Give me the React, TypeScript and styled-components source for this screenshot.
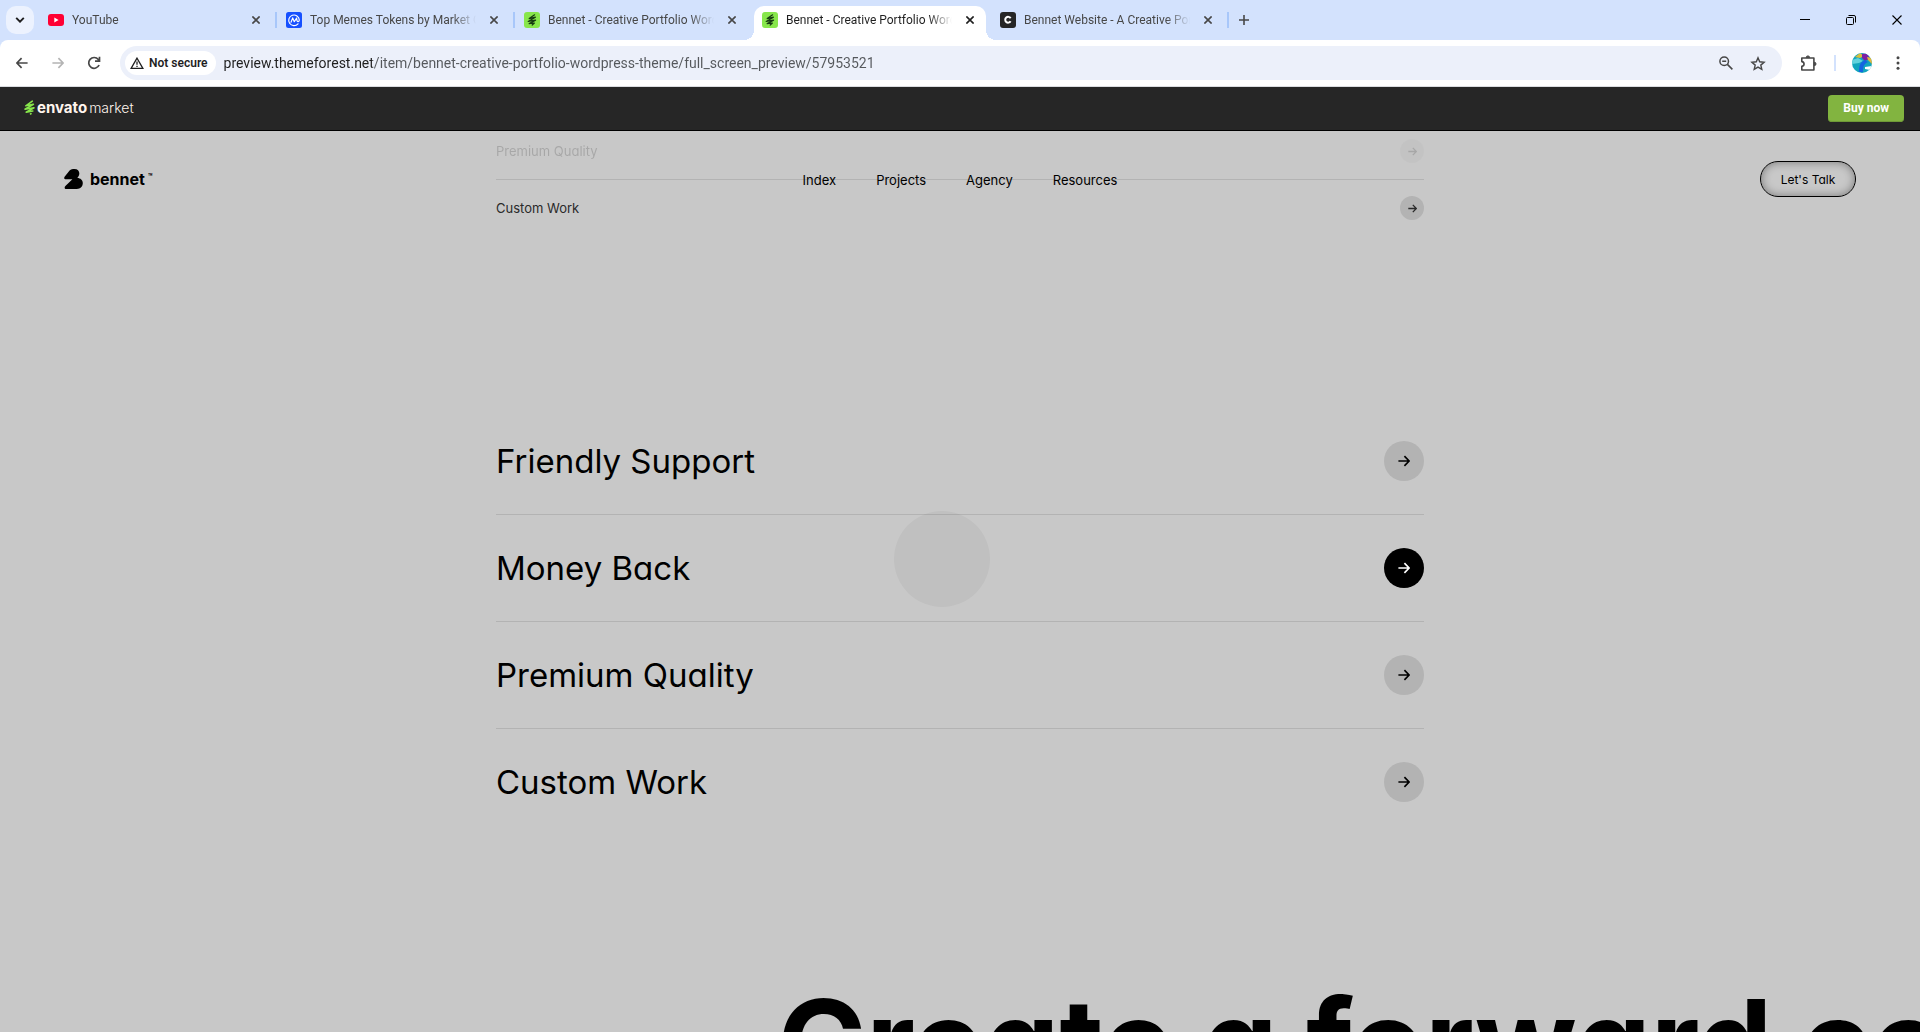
import React from "react";
import styled, { createGlobalStyle, css } from "styled-components";

const chromeFont = `Roboto, "Open Sans", "Noto Sans", sans-serif`;
const siteFont = `Inter, "Liberation Sans", sans-serif`;

const GlobalStyle = createGlobalStyle`
  *, *::before, *::after { box-sizing: border-box; }
  body { margin: 0; background: #c8c8c8; }
  button { border: 0; padding: 0; background: none; font: inherit; color: inherit; }
  a { color: inherit; text-decoration: none; }
  ul { margin: 0; padding: 0; list-style: none; }
  svg { display: block; flex: none; }
`;

const Window = styled.div`
  display: flex;
  flex-direction: column;
  height: 100vh;
  overflow: hidden;
`;

/* Browser tab strip */

const TabStrip = styled.div`
  display: flex;
  align-items: flex-start;
  height: 40px;
  padding-left: 6px;
  background: #d3e2fd;
  font-family: ${chromeFont};
  font-size: 12px;
`;

const TabSearch = styled.button`
  display: grid;
  place-items: center;
  width: 28px;
  height: 28px;
  margin: 6px 6px 0 0;
  border-radius: 10px;
  background: #ecf2fe;
  color: #1f1f1f;
`;

const TabItem = styled.div<{ $active?: boolean; $divider?: boolean }>`
  position: relative;
  display: flex;
  align-items: center;
  width: 232px;
  height: 34px;
  margin: 6px 6px 0 0;
  padding: 0 10px 6px 8px;
  color: #474747;
  ${(p) =>
    p.$active &&
    css`
      background: #fff;
      color: #1f1f1f;
      border-radius: 10px 10px 0 0;
      &::before,
      &::after {
        content: "";
        position: absolute;
        bottom: 0;
        width: 10px;
        height: 10px;
      }
      &::before {
        left: -10px;
        background: radial-gradient(circle at 0 0, transparent 10px, #fff 10px);
      }
      &::after {
        right: -10px;
        background: radial-gradient(circle at 100% 0, transparent 10px, #fff 10px);
      }
    `}
  ${(p) =>
    p.$divider &&
    css`
      &::after {
        content: "";
        position: absolute;
        right: -5px;
        top: 6px;
        width: 2px;
        height: 16px;
        background: #a8c7fa;
      }
    `}
`;

const TabTitle = styled.span`
  flex: 1;
  min-width: 0;
  margin: 0 12px 0 8px;
  line-height: 20px;
  white-space: nowrap;
  overflow: hidden;
  mask-image: linear-gradient(to right, #000 calc(100% - 24px), transparent);
`;

const TabClose = styled.button`
  display: grid;
  place-items: center;
  width: 12px;
  height: 16px;
`;

const NewTab = styled.button`
  display: grid;
  place-items: center;
  width: 28px;
  height: 28px;
  margin-top: 6px;
  color: #474747;
`;

const WindowControls = styled.div`
  display: flex;
  margin-left: auto;
`;

const WindowButton = styled.button`
  display: grid;
  place-items: center;
  width: 46px;
  height: 40px;
  color: #000;
`;

/* Browser toolbar */

const ToolbarBack = styled.div`
  background: #d3e2fd;
`;

const Toolbar = styled.div`
  display: flex;
  align-items: center;
  height: 47px;
  padding: 0 4px;
  background: #fff;
  border-bottom: 1px solid #dadce0;
  border-radius: 8px 8px 0 0;
  color: #474747;
  font-family: ${chromeFont};
`;

const ToolButton = styled.button`
  display: grid;
  place-items: center;
  width: 36px;
  height: 34px;
  &:disabled { color: #b4b4b4; }
`;

const Omnibox = styled.div`
  display: flex;
  flex: 1;
  align-items: center;
  height: 34px;
  margin: 0 8px;
  padding: 0 8px 0 5px;
  border-radius: 17px;
  background: #ecf0fa;
`;

const SecurityChip = styled.button`
  display: flex;
  align-items: center;
  gap: 5px;
  height: 24px;
  padding: 0 8px 0 5px;
  border-radius: 12px;
  background: #fff;
  color: #1f1f1f;
  font-size: 12px;
  font-weight: 600;
`;

const Address = styled.input`
  flex: 1;
  min-width: 0;
  height: 24px;
  margin-left: 8px;
  padding: 0;
  border: 0;
  outline: 0;
  background: linear-gradient(to right, #1f1f1f 148px, #55585c 148px) text;
  color: #474747;
  -webkit-text-fill-color: transparent;
  font-family: inherit;
  font-size: 14px;
`;

const FieldButton = styled(ToolButton)`
  width: 32px;
`;

const Divider = styled.span`
  width: 2px;
  height: 16px;
  margin: 0 8px;
  background: #d3e2fd;
`;

/* Marketplace preview bar */

const MarketBar = styled.header`
  display: flex;
  flex: none;
  align-items: center;
  justify-content: space-between;
  height: 44px;
  padding: 0 16px 0 24px;
  background: #262626;
  border-bottom: 1px solid #000;
  font-family: ${siteFont};
`;

const MarketLogo = styled.a`
  display: flex;
  align-items: center;
  padding-bottom: 2px;
  color: #fff5ed;
  line-height: 20px;
`;

const MarketName = styled.span<{ $bold?: boolean }>`
  margin-left: 2px;
  font-size: ${(p) => (p.$bold ? "15px" : "14px")};
  font-weight: ${(p) => (p.$bold ? 700 : 300)};
`;

const BuyButton = styled.a`
  height: 27px;
  padding: 0 15px;
  border-radius: 4px;
  background: #82b440;
  box-shadow: inset 0 -1px 0 #6f9a37;
  color: #fff;
  font: 700 12px/27px Roboto, sans-serif;
`;

/* Theme page */

const Page = styled.main`
  position: relative;
  flex: 1;
  min-height: 0;
  overflow: hidden;
  background: #c8c8c8;
  color: #000;
  font-family: ${siteFont};
  font-feature-settings: "cv11";
`;

const SiteHeader = styled.div`
  position: absolute;
  inset: 0 0 auto;
  display: grid;
  grid-template-columns: 1fr auto 1fr;
  align-items: center;
  height: 96px;
  padding: 0 64px;
  font-size: 13px;
`;

const Brand = styled.a`
  display: flex;
  align-items: center;
  gap: 7px;
  font-size: 16px;
  font-weight: 700;
  line-height: 20px;
`;

const Trademark = styled.sup`
  margin-left: 3px;
  font-size: 7px;
  line-height: 8px;
`;

const SiteNav = styled.nav`
  display: flex;
  gap: 40px;
  padding-top: 2px;
`;

const TalkButton = styled.button`
  justify-self: end;
  width: 96px;
  height: 36px;
  border: 1px solid #000;
  border-radius: 18px;
  box-shadow: inset 0 0 10px rgba(0, 0, 0, 0.4);
  font-size: 12px;
`;

const Features = styled.ul<{ $large?: boolean }>`
  width: 928px;
  max-width: calc(100% - 64px);
  margin: ${(p) => (p.$large ? "172px auto 0" : "-8px auto 0")};
  font-size: ${(p) => (p.$large ? "33px" : "13px")};
`;

const Feature = styled.li<{ $large?: boolean; $faded?: boolean }>`
  & + & { border-top: 1px solid ${(p) => (p.$large ? "#b3b3b3" : "#bfbfbf")}; }
  > a {
    display: flex;
    align-items: center;
    justify-content: space-between;
    height: ${(p) => (p.$large ? "106px" : "56px")};
    color: ${(p) => (p.$large ? "#000" : "#2a2a2a")};
    opacity: ${(p) => (p.$faded ? 0.2 : 1)};
  }
`;

const ArrowDot = styled.span<{ $large?: boolean; $active?: boolean }>`
  display: grid;
  place-items: center;
  width: ${(p) => (p.$large ? "40px" : "24px")};
  height: ${(p) => (p.$large ? "40px" : "24px")};
  border-radius: 50%;
  background: ${(p) => (p.$active ? "#000" : "#b3b3b3")};
  color: ${(p) => (p.$active ? "#fff" : "inherit")};
`;

const Headline = styled.h2`
  margin: 128px 0 0;
  padding-left: 40.5%;
  font-size: 120px;
  font-weight: 700;
  line-height: 160px;
  white-space: nowrap;
`;

const CursorHalo = styled.div`
  position: absolute;
  left: 894px;
  top: 380px;
  width: 96px;
  height: 96px;
  border-radius: 50%;
  background: rgba(0, 0, 0, 0.04);
  pointer-events: none;
`;

const Cross = ({ size = 8, weight = 1.6 }: { size?: number; weight?: number }) => (
  <svg width={size} height={size} viewBox="0 0 8 8" fill="none" stroke="currentColor" strokeWidth={weight}>
    <path d="M.4.4l7.2 7.2M7.6.4L.4 7.6" />
  </svg>
);

const Arrow = ({ size, back }: { size: number; back?: boolean }) => (
  <svg width={size} height={size} viewBox="0 0 12 12" fill="none" stroke="currentColor" strokeWidth="1.7">
    <path d={back ? "M11.600 6H1M5.600 1.200L.9 6l4.700 4.800" : "M.4 6h10.600M6.400 1.200L11.100 6l-4.700 4.800"} />
  </svg>
);

const YouTubeIcon = () => (
  <svg width="16" height="16" viewBox="0 0 16 16">
    <rect y="2" width="16" height="12" rx="3" fill="#ff0033" />
    <path d="M6.3 5.6v4.8L10.6 8z" fill="#fff" />
  </svg>
);

const MarketCapIcon = () => (
  <svg width="16" height="16" viewBox="0 0 16 16" fill="none">
    <rect width="16" height="16" rx="2.5" fill="#1650ff" />
    <path
      d="M12 11.8A5.3 5.3 0 1 1 13.3 8c0 1.900-2.200 2.200-2.400.3L10.600 6 8.300 9.700 6.700 5.900 5 10.200"
      stroke="#fff"
      strokeWidth="1.200"
      strokeLinecap="round"
      strokeLinejoin="round"
    />
  </svg>
);

const EnvatoTabIcon = () => (
  <svg width="16" height="16" viewBox="0 0 16 16" fill="none">
    <rect width="16" height="16" rx="3" fill="#87e64b" />
    <path
      d="M10.600 2.800L5.200 6.600l6.200-1.400L4.200 9.400l7.400-1.200L5.200 11.600l5.200-.6-2.200 2"
      stroke="#173b12"
      strokeWidth="1.200"
      strokeLinecap="round"
      strokeLinejoin="round"
    />
  </svg>
);

const EnvatoMark = () => (
  <svg width="11" height="15" viewBox="0 0 11 15" fill="none">
    <path
      d="M8.300 1.200L1.800 5.800l7.600-1.600L1 9.200l9-1.400-7.800 4.400 6.600-1.200M6.600 14l.4-.3"
      stroke="#87e64b"
      strokeWidth="1.600"
      strokeLinecap="round"
      strokeLinejoin="round"
    />
  </svg>
);

const LetterTabIcon = () => (
  <svg width="16" height="16" viewBox="0 0 16 16" fill="none">
    <rect width="16" height="16" rx="3" fill="#262626" />
    <path d="M10.600 6.200A2.900 2.900 0 1 0 10.600 9.300" stroke="#fff" strokeWidth="2" />
  </svg>
);

const BennetMark = () => (
  <svg width="19" height="20" viewBox="0 0 19 20">
    <path d="M5.600 1.400C7 .3 8.600 0 10.400 0c3.400 0 5.100 2.200 4.900 4.700-.1 1.700-.9 2.900-2 4.200 3.200 0 5.500 2.100 5.500 5.200 0 3.500-2.400 5.900-6 5.900H2.200C.4 20 .2 18.300 1.400 17L8.400 10.200H1.300C0 10.200-.1 8.700.6 7.700z" />
  </svg>
);

const Avatar = () => (
  <svg width="20" height="20" viewBox="0 0 20 20">
    <clipPath id="avatarClip">
      <circle cx="10" cy="10" r="10" />
    </clipPath>
    <g clipPath="url(#avatarClip)">
      <rect width="20" height="20" fill="#12a5bd" />
      <path d="M0 7l6-2 5 3-4 2-7 1z" fill="#62d2dc" />
      <path d="M3 4l5-4 4 3-4 2z" fill="#d8bd3c" />
      <path d="M10 1l6-1 1 6-4 2-3-3z" fill="#7b1fa2" />
      <path d="M15 4l5 1v6l-4-4z" fill="#e5b93a" />
      <path d="M13 7c-5 2-6 6-6 12h4c0-6 1-8 5-10z" fill="#1565e0" />
      <path d="M13 14l7-1-2 4-5-1z" fill="#fff" />
    </g>
  </svg>
);

const tabs = [
  { title: "YouTube", icon: <YouTubeIcon />, divider: true },
  { title: "Top Memes Tokens by Market C", icon: <MarketCapIcon />, divider: true },
  { title: "Bennet - Creative Portfolio Word", icon: <EnvatoTabIcon /> },
  { title: "Bennet - Creative Portfolio Word", icon: <EnvatoTabIcon />, active: true },
  { title: "Bennet Website - A Creative Por", icon: <LetterTabIcon />, divider: true },
];

const Browser = () => (
  <>
    <TabStrip>
      <TabSearch aria-label="Search tabs">
        <svg width="10" height="6" viewBox="0 0 10 6" fill="none" stroke="currentColor" strokeWidth="1.900">
          <path d="M1.200.9L5 4.700 8.800.9" />
        </svg>
      </TabSearch>
      {tabs.map((tab, i) => (
        <TabItem key={i} $active={tab.active} $divider={tab.divider}>
          {tab.icon}
          <TabTitle>{tab.title}</TabTitle>
          <TabClose aria-label={`Close ${tab.title}`}>
            <Cross />
          </TabClose>
        </TabItem>
      ))}
      <NewTab aria-label="New tab">
        <svg width="10" height="10" viewBox="0 0 10 10" stroke="currentColor" strokeWidth="1.600">
          <path d="M5 0v10M0 5h10" />
        </svg>
      </NewTab>
      <WindowControls>
        <WindowButton aria-label="Minimize">
          <svg width="10" height="10" viewBox="0 0 10 10" stroke="currentColor">
            <path d="M0 4.500h10" />
          </svg>
        </WindowButton>
        <WindowButton aria-label="Restore">
          <svg width="10" height="10" viewBox="0 0 10 10" fill="none" stroke="currentColor">
            <rect x=".5" y="2.500" width="7" height="7" rx="1" />
            <path d="M2.500.5H8A1.500 1.500 0 0 1 9.500 2v5.500" />
          </svg>
        </WindowButton>
        <WindowButton aria-label="Close window">
          <Cross size={10} weight={0.9} />
        </WindowButton>
      </WindowControls>
    </TabStrip>
    <ToolbarBack>
      <Toolbar>
        <ToolButton aria-label="Back">
          <Arrow size={12} back />
        </ToolButton>
        <ToolButton aria-label="Forward" disabled>
          <Arrow size={12} />
        </ToolButton>
        <ToolButton aria-label="Reload">
          <svg width="14" height="14" viewBox="0 0 14 14" fill="none" stroke="currentColor" strokeWidth="1.700">
            <path d="M12.100 9A5.400 5.400 0 1 1 11.300 3.500L12.300 5M12.500.7V5.200H8" />
          </svg>
        </ToolButton>
        <Omnibox>
          <SecurityChip>
            <svg width="14" height="12" viewBox="0 0 14 12" fill="none" stroke="currentColor" strokeWidth="1.300">
              <path d="M7 1.200L1.100 11.300h11.800zM7 4.600v3.200M7 8.700V10" />
            </svg>
            Not secure
          </SecurityChip>
          <Address
            aria-label="Address"
            defaultValue="preview.themeforest.net/item/bennet-creative-portfolio-wordpress-theme/full_screen_preview/57953521"
          />
          <FieldButton aria-label="Zoom">
            <svg width="14" height="14" viewBox="0 0 14 14" fill="none" stroke="currentColor" strokeWidth="1.500">
              <circle cx="5.200" cy="5.200" r="4.300" />
              <path d="M8.400 8.400l5 5M3.200 5.200h4" />
            </svg>
          </FieldButton>
          <FieldButton aria-label="Bookmark this page">
            <svg width="16" height="15" viewBox="0 0 16 15" fill="none" stroke="currentColor" strokeWidth="1.400">
              <path d="M8 1.800l1.700 4 4.400.4-3.300 2.900 1 4.300L8 11.100l-3.800 2.300 1-4.300-3.300-2.900 4.400-.4z" />
            </svg>
          </FieldButton>
        </Omnibox>
        <ToolButton aria-label="Extensions">
          <svg width="17" height="17" viewBox="0 0 17 17" fill="none" stroke="currentColor" strokeWidth="1.600">
            <path d="M1.800 3h12.100v12H1.800v-3.600c3-.4 3-4.400 0-4.800z" strokeLinejoin="round" />
            <path d="M6.200 2.600a1.700 1.700 0 0 1 3.400 0zM14.300 7.200a1.700 1.700 0 0 1 0 3.400z" fill="currentColor" strokeWidth="1" />
          </svg>
        </ToolButton>
        <Divider />
        <ToolButton aria-label="Profile">
          <Avatar />
        </ToolButton>
        <ToolButton aria-label="Menu">
          <svg width="4" height="14" viewBox="0 0 4 14" fill="currentColor">
            <circle cx="2" cy="1.700" r="1.500" />
            <circle cx="2" cy="7" r="1.500" />
            <circle cx="2" cy="12.300" r="1.500" />
          </svg>
        </ToolButton>
      </Toolbar>
    </ToolbarBack>
  </>
);

const FeatureList = ({ items, large, faded, active }: { items: string[]; large?: boolean; faded?: string; active?: string }) => (
  <Features $large={large}>
    {items.map((item) => (
      <Feature key={item} $large={large} $faded={item === faded}>
        <a href="#features">
          {item}
          <ArrowDot $large={large} $active={item === active}>
            <Arrow size={large ? 12 : 9} />
          </ArrowDot>
        </a>
      </Feature>
    ))}
  </Features>
);

export default function App() {
  return (
    <Window>
      <GlobalStyle />
      <Browser />
      <MarketBar>
        <MarketLogo href="#market">
          <EnvatoMark />
          <MarketName $bold>envato</MarketName>
          <MarketName>market</MarketName>
        </MarketLogo>
        <BuyButton href="#buy">Buy now</BuyButton>
      </MarketBar>
      <Page>
        <FeatureList items={["Premium Quality", "Custom Work"]} faded="Premium Quality" />
        <FeatureList
          large
          items={["Friendly Support", "Money Back", "Premium Quality", "Custom Work"]}
          active="Money Back"
        />
        <Headline>Create a forward co</Headline>
        <SiteHeader>
          <Brand href="#home">
            <BennetMark />
            <span>
              bennet<Trademark>™</Trademark>
            </span>
          </Brand>
          <SiteNav>
            <a href="#index">Index</a>
            <a href="#projects">Projects</a>
            <a href="#agency">Agency</a>
            <a href="#resources">Resources</a>
          </SiteNav>
          <TalkButton>Let's Talk</TalkButton>
        </SiteHeader>
        <CursorHalo />
      </Page>
    </Window>
  );
}
